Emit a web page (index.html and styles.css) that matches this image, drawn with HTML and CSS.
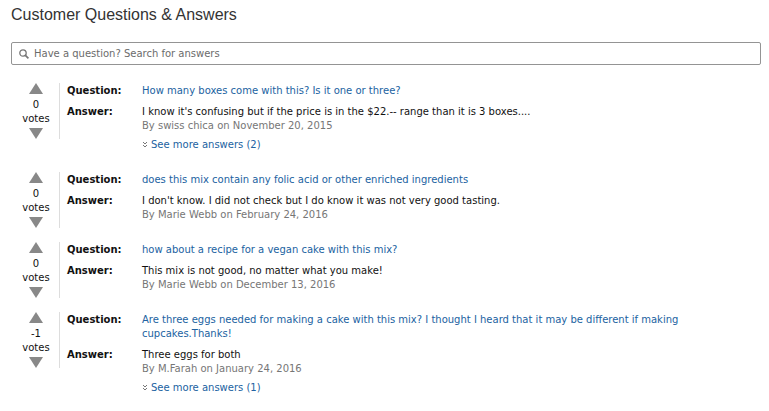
FILE: index.html
```html
<!DOCTYPE html>
<html lang="en">
<head>
    <meta charset="UTF-8">
    <meta name="viewport" content="width=device-width, initial-scale=1.0">
    <title>Customer Questions &amp; Answers</title>
    <link rel="stylesheet" href="styles.css">
</head>
<body>
    <main class="qa">
        <h1>Customer Questions &amp; Answers</h1>
        <form class="search" role="search">
            <svg class="search-icon" viewBox="0 0 10 10" aria-hidden="true">
                <circle cx="4" cy="4" r="3.2" fill="none" stroke="currentColor" stroke-width="1.3"/>
                <path d="M6.2 6.2L9.4 9.4" stroke="currentColor" stroke-width="1.7"/>
            </svg>
            <input type="search" aria-label="Search questions" placeholder="Have a question? Search for answers">
        </form>

        <article class="item">
            <div class="votes">
                <button class="up" type="button" aria-label="Vote up"></button>
                <span>0</span>
                <span>votes</span>
                <button class="down" type="button" aria-label="Vote down"></button>
            </div>
            <div class="content">
                <div class="row">
                    <strong>Question:</strong>
                    <a href="#">How many boxes come with this? Is it one or three?</a>
                </div>
                <div class="row">
                    <strong>Answer:</strong>
                    <div>
                        <p>I know it's confusing but if the price is in the $22.-- range than it is 3 boxes....</p>
                        <p class="author">By swiss chica on November 20, 2015</p>
                        <a class="more" href="#">
                            <svg viewBox="0 0 6 8" aria-hidden="true"><path d="M1 1l2 2 2-2M1 4l2 2 2-2"/></svg>
                            See more answers (2)
                        </a>
                    </div>
                </div>
            </div>
        </article>

        <article class="item">
            <div class="votes">
                <button class="up" type="button" aria-label="Vote up"></button>
                <span>0</span>
                <span>votes</span>
                <button class="down" type="button" aria-label="Vote down"></button>
            </div>
            <div class="content">
                <div class="row">
                    <strong>Question:</strong>
                    <a href="#">does this mix contain any folic acid or other enriched ingredients</a>
                </div>
                <div class="row">
                    <strong>Answer:</strong>
                    <div>
                        <p>I don't know. I did not check but I do know it was not very good tasting.</p>
                        <p class="author">By Marie Webb on February 24, 2016</p>
                    </div>
                </div>
            </div>
        </article>

        <article class="item">
            <div class="votes">
                <button class="up" type="button" aria-label="Vote up"></button>
                <span>0</span>
                <span>votes</span>
                <button class="down" type="button" aria-label="Vote down"></button>
            </div>
            <div class="content">
                <div class="row">
                    <strong>Question:</strong>
                    <a href="#">how about a recipe for a vegan cake with this mix?</a>
                </div>
                <div class="row">
                    <strong>Answer:</strong>
                    <div>
                        <p>This mix is not good, no matter what you make!</p>
                        <p class="author">By Marie Webb on December 13, 2016</p>
                    </div>
                </div>
            </div>
        </article>

        <article class="item">
            <div class="votes">
                <button class="up" type="button" aria-label="Vote up"></button>
                <span>-1</span>
                <span>votes</span>
                <button class="down" type="button" aria-label="Vote down"></button>
            </div>
            <div class="content">
                <div class="row">
                    <strong>Question:</strong>
                    <a href="#">Are three eggs needed for making a cake with this mix? I thought I heard that it may be different if making cupcakes.Thanks!</a>
                </div>
                <div class="row">
                    <strong>Answer:</strong>
                    <div>
                        <p>Three eggs for both</p>
                        <p class="author">By M.Farah on January 24, 2016</p>
                        <a class="more" href="#">
                            <svg viewBox="0 0 6 8" aria-hidden="true"><path d="M1 1l2 2 2-2M1 4l2 2 2-2"/></svg>
                            See more answers (1)
                        </a>
                    </div>
                </div>
            </div>
        </article>
    </main>
</body>
</html>
```

FILE: styles.css
```css
* {
    box-sizing: border-box;
}
body {
    margin: 0;
    background: #fff;
    color: #111;
    font-family: Verdana, "DejaVu Sans", sans-serif;
    font-size: 10px;
    line-height: 14px;
}
.qa {
    padding: 5px 8px 0 11px;
}
h1 {
    margin: 0 0 17px;
    color: #333;
    font-family: Arial, "Liberation Sans", sans-serif;
    font-size: 16px;
    font-weight: normal;
    line-height: 20px;
}
p {
    margin: 0;
}
a {
    color: #2162a1;
    text-decoration: none;
}
a:hover {
    text-decoration: underline;
}
.search {
    display: flex;
    align-items: center;
    gap: 5px;
    height: 23px;
    margin-bottom: 18px;
    padding: 0 7px;
    border: 1px solid #949494;
    border-radius: 2px;
}
.search-icon {
    width: 10px;
    height: 10px;
    color: #777;
}
.search input {
    flex: 1;
    min-width: 0;
    padding: 0;
    border: 0;
    outline: 0;
    background: none;
    color: #111;
    font: inherit;
}
.search input::placeholder {
    color: #6b6b6b;
    opacity: 1;
}
.item {
    display: flex;
    align-items: flex-start;
    margin-bottom: 14px;
}
.votes {
    display: flex;
    flex-direction: column;
    align-items: center;
    width: 49px;
    height: 56px;
    padding-left: 2px;
    border-right: 1px solid #ddd;
}
.votes button {
    width: 14px;
    height: 11px;
    padding: 0;
    border: 0;
    background: #888;
    cursor: pointer;
}
.votes .up {
    margin-bottom: 4px;
    clip-path: polygon(50% 0, 100% 100%, 0 100%);
}
.votes .down {
    margin-top: 2px;
    clip-path: polygon(0 0, 100% 0, 50% 100%);
}
.content {
    flex: 1;
    padding: 1px 0 0 7px;
}
.row {
    display: grid;
    grid-template-columns: 75px 1fr;
}
.row + .row {
    margin-top: 7px;
}
.author {
    color: #767676;
}
.more {
    display: flex;
    align-items: center;
    gap: 3px;
    padding: 5px 0 6px;
}
.more svg {
    width: 6px;
    height: 8px;
    fill: none;
    stroke: #777;
}
```
